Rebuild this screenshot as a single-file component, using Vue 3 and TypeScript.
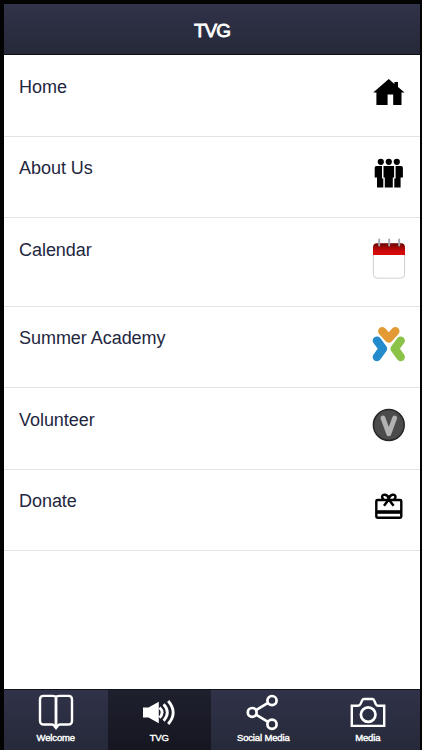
<script setup lang="ts">
type IconName = 'home' | 'people' | 'calendar' | 'academy' | 'volunteer' | 'gift'
type TabName = 'book' | 'speaker' | 'share' | 'camera'

interface MenuItem {
  label: string
  icon: IconName
}

interface Tab {
  label: string
  icon: TabName
  active?: boolean
}

const items: MenuItem[] = [
  { label: 'Home', icon: 'home' },
  { label: 'About Us', icon: 'people' },
  { label: 'Calendar', icon: 'calendar' },
  { label: 'Summer Academy', icon: 'academy' },
  { label: 'Volunteer', icon: 'volunteer' },
  { label: 'Donate', icon: 'gift' },
]

const tabs: Tab[] = [
  { label: 'Welcome', icon: 'book' },
  { label: 'TVG', icon: 'speaker', active: true },
  { label: 'Social Media', icon: 'share' },
  { label: 'Media', icon: 'camera' },
]
</script>

<template>
  <div class="frame">
    <div class="screen">
      <header class="header"><h1>TVG</h1></header>

      <ul class="menu">
        <li v-for="item in items" :key="item.label" class="row" :class="item.icon">
          <span class="label">{{ item.label }}</span>

          <svg v-if="item.icon === 'home'" class="icon" viewBox="0 0 34 34">
            <path d="M16.8 4 22.4 8.9V7H26V11.9L32.6 17.5H29.5V30H21.2V19.5H15.6V30H4.4V17.5H1.2Z" />
          </svg>

          <svg v-else-if="item.icon === 'people'" class="icon" viewBox="0 -1 34 34">
            <circle cx="8.8" cy="4.8" r="3.1" />
            <circle cx="16.8" cy="4.8" r="3.1" />
            <circle cx="24.8" cy="4.8" r="3.1" />
            <path d="M11.5 9.1H22.1V20.4H20.8V30.5H12.8V20.4H11.5Z" />
            <path d="M4.4 9.1H10V21.4H11.3V30.5H5V20.4H2.7V10.8Q2.7 9.1 4.4 9.1Z" />
            <path d="M29.2 9.1H23.6V21.4H22.3V30.5H28.6V20.4H30.9V10.8Q30.9 9.1 29.2 9.1Z" />
          </svg>

          <svg v-else-if="item.icon === 'calendar'" class="icon tall" viewBox="0 0 34 42">
            <defs>
              <linearGradient id="cal-red" x1="0" y1="0" x2="0" y2="1">
                <stop offset="0" stop-color="#6a0505" />
                <stop offset="0.35" stop-color="#a00808" />
                <stop offset="0.75" stop-color="#d60a0a" />
                <stop offset="1" stop-color="#d80808" />
              </linearGradient>
            </defs>
            <rect x="1.4" y="6" width="31.2" height="34.2" rx="4" fill="#fff" stroke="#cfcfcf" />
            <path d="M1 17V9.6Q1 5.3 5 5.3H29Q33 5.3 33 9.6V17Z" fill="url(#cal-red)" />
            <path d="M7.2 1.5V7.5M17.2 1.5V7.5M27.2 1.5V7.5" stroke="#a3acb3" stroke-width="1.9" stroke-linecap="round" />
          </svg>

          <svg v-else-if="item.icon === 'academy'" class="icon" viewBox="0 0 34 36" fill="none" stroke-width="8.4" stroke-linecap="round" stroke-linejoin="round">
            <path d="M10.3 5.2 16.8 12.6 23.3 5.2" stroke="#e39a35" />
            <path d="M4.9 14.6 10.9 22.8 4.9 31" stroke="#238acb" />
            <path d="M28.7 14.6 22.7 22.8 28.7 31" stroke="#8bc248" />
          </svg>

          <svg v-else-if="item.icon === 'volunteer'" class="icon" viewBox="0 0 34 34">
            <circle cx="16.8" cy="17" r="15.4" fill="#4b4b4b" stroke="#262626" stroke-width="1.5" />
            <path d="M11 10.1 16.8 25.8 22.6 10.1" fill="none" stroke="#b2b2b2" stroke-width="4.8" stroke-linecap="round" stroke-linejoin="round" />
          </svg>

          <svg v-else class="icon" viewBox="0 -0.8 34 34" fill="none" stroke="#000" stroke-width="2.4" stroke-linejoin="round">
            <rect x="4.3" y="10.2" width="25" height="17.8" rx="1.2" />
            <path d="M4.3 22.2H29.3" stroke-width="3.6" />
            <path d="M16.8 9.2C16 4.2 10.2 3.6 10.1 7Q10 8.8 11.8 9.6M16.8 9.2C17.6 4.2 23.4 3.6 23.5 7Q23.6 8.8 21.8 9.6M16.8 9.6 12 16M16.8 9.6 21.6 16" stroke-width="2.5" />
          </svg>
        </li>
      </ul>

      <nav class="tabs">
        <a v-for="tab in tabs" :key="tab.label" class="tab" :class="{ active: tab.active }">
          <svg v-if="tab.icon === 'book'" class="tab-icon" viewBox="0 0 38 38" fill="none" stroke="#fff" stroke-width="2.4">
            <path d="M6.5 2.9H15.4Q19 2.9 19 4.8 19 2.9 22.6 2.9H31.5Q35 2.9 35 6.4V27.7Q35 31.5 31 31.5H23Q21.5 31.5 20.8 32.7L19 34.8 17.2 32.7Q16.5 31.5 15 31.5H7Q3 31.5 3 27.7V6.4Q3 2.9 6.5 2.9Z" />
            <path d="M19 4.5V33" stroke-width="2.8" />
            <path d="M15.8 31.8H22.2L19 36.7Z" fill="#fff" stroke="none" />
          </svg>

          <svg v-else-if="tab.icon === 'speaker'" class="tab-icon" viewBox="0 0 38 38" fill="none" stroke="#fff" stroke-width="2.8">
            <path d="M3 14.5H8.5L18.8 8.8V30.3L8.5 24.5H3Z" fill="#fff" stroke="none" />
            <path d="M19.6 14.5Q24.6 19.5 19.6 24.7M23.6 11.3Q31 19.5 23.6 27.8M28.2 8Q38.2 19.5 28.2 31" />
          </svg>

          <svg v-else-if="tab.icon === 'share'" class="tab-icon" viewBox="0 0 38 38" fill="none" stroke="#fff" stroke-width="2.7">
            <circle cx="8.2" cy="19.4" r="4.4" />
            <circle cx="28" cy="7.6" r="4.6" />
            <circle cx="28" cy="31.2" r="4.6" />
            <path d="M12 17.1 24 9.9M12 21.7 24 28.8" />
          </svg>

          <svg v-else class="tab-icon" viewBox="0 0 38 38" fill="none" stroke="#fff" stroke-width="2.4">
            <path d="M2.8 12.8H8.8Q10.8 12.8 11.6 10.9L13.2 7.3Q13.7 6 15 6H23.3Q24.6 6 25.1 7.3L26.7 10.9Q27.5 12.8 29.5 12.8H35.2V32.9H2.8Z" />
            <circle cx="19.2" cy="21.6" r="7.3" stroke-width="2.7" />
          </svg>
          <span class="tab-label">{{ tab.label }}</span>
        </a>
      </nav>
    </div>
  </div>
</template>

<style>
body {
  margin: 0;
  background: #040303;
}
</style>

<style scoped>
.frame {
  box-sizing: border-box;
  width: 422px;
  height: 750px;
  padding: 4px 2px 0 4px;
  background: #040303;
  font-family: "Liberation Sans", Arial, sans-serif;
}

.screen {
  display: flex;
  flex-direction: column;
  height: 746px;
  background: #fff;
  overflow: hidden;
}

.header {
  box-sizing: border-box;
  flex: none;
  height: 51px;
  display: flex;
  align-items: center;
  justify-content: center;
  background: linear-gradient(#303349, #262939);
  border-bottom: 1px solid #0e0f16;
}

h1 {
  margin: 3px 0 0;
  font-size: 19px;
  line-height: 22px;
  font-weight: 400;
  letter-spacing: -1.1px;
  -webkit-text-stroke: 0.8px #fff;
  color: #fff;
}

.menu {
  flex: 1;
  margin: 0;
  padding: 0;
  list-style: none;
}

.row {
  box-sizing: border-box;
  display: flex;
  justify-content: space-between;
  height: 81.5px;
  padding: 19.5px 14px 0 15px;
  border-bottom: 1.5px solid #e4e4e4;
}

.row.calendar {
  height: 88.5px;
}

.label {
  font-size: 18px;
  line-height: 24px;
  letter-spacing: -0.04px;
  color: #232640;
}

.icon {
  width: 34px;
  height: 34px;
}

.icon.tall {
  height: 42px;
}

.row.academy .icon {
  height: 36px;
}

.tabs {
  flex: none;
  display: grid;
  grid-template-columns: 103.5px 103.5px 104.5px 104.5px;
  height: 61px;
  box-sizing: border-box;
  border-top: 1px solid #11131d;
  background: linear-gradient(#303349, #262939);
}

.tab {
  display: flex;
  flex-direction: column;
  align-items: center;
}

.tab.active {
  background: linear-gradient(#1f202e, #151620);
}

.tab-icon {
  width: 38px;
  height: 38px;
  margin-top: 3px;
}

.tab-label {
  margin-top: 1px;
  font-size: 9.5px;
  line-height: 12px;
  font-weight: 400;
  letter-spacing: -0.15px;
  -webkit-text-stroke: 0.4px #fff;
  color: #fff;
}
</style>
